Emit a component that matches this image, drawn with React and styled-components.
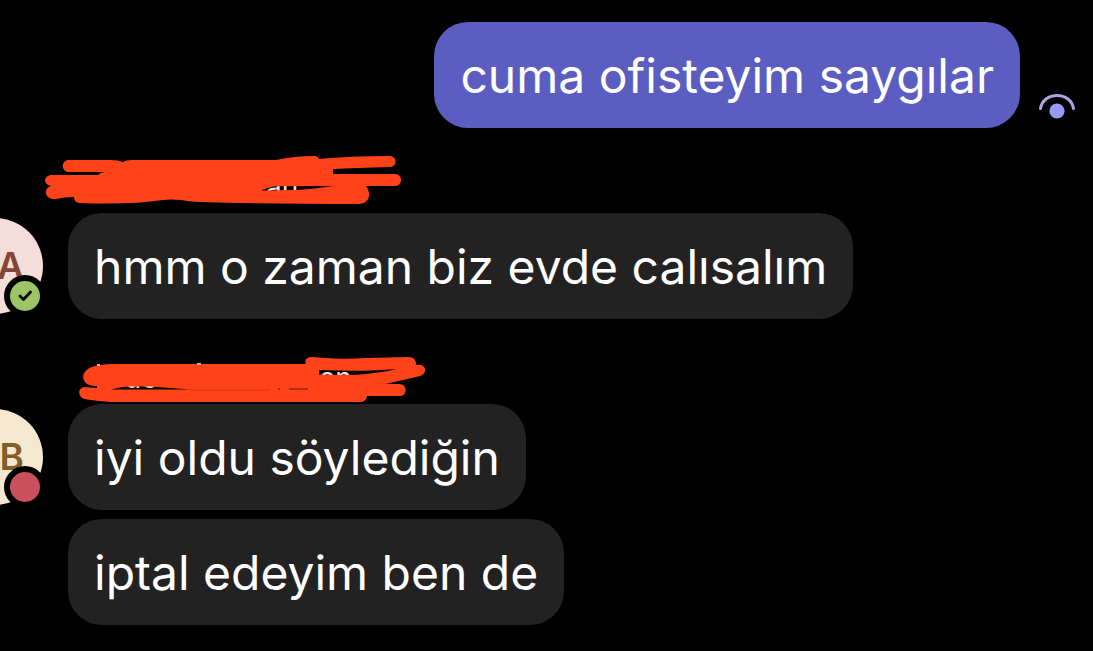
import React from "react";
import styled, { createGlobalStyle } from "styled-components";

const GlobalStyle = createGlobalStyle`
  body {
    margin: 0;
    background: #000;
    color: #fff;
    font-family: Inter, "Liberation Sans", sans-serif;
  }
`;

const Thread = styled.main`
  box-sizing: border-box;
  min-height: 100vh;
  padding: 22px 0 24px;
  display: flex;
  flex-direction: column;
  gap: 35px;
  overflow: hidden;
`;

const SentRow = styled.section`
  display: flex;
  justify-content: flex-end;
  align-items: flex-end;
  gap: 18px;
  padding-right: 17px;
`;

const Bubble = styled.p`
  margin: 0;
  padding: 21px 26px 19px;
  border-radius: 34px;
  background: ${(p) => (p.$sent ? "#5c5dc0" : "#222222")};
  font-size: 48px;
  line-height: 66px;
`;

const SeenIcon = styled.svg`
  flex: none;
  width: 38px;
  height: 28px;
  padding-bottom: 8px;
`;

const ReceivedRow = styled.section`
  display: flex;
  align-items: flex-start;
  gap: 25px;
`;

const Avatar = styled.div`
  position: relative;
  box-sizing: border-box;
  flex: none;
  width: 96px;
  height: 96px;
  margin: 55px 0 0 -53px;
  padding-right: 19px;
  border-radius: 50%;
  background: ${(p) => p.$bg};
  color: ${(p) => p.$ink};
  font-size: 37px;
  font-weight: 600;
  line-height: 96px;
  text-align: right;
`;

const Presence = styled.span`
  position: absolute;
  right: -3px;
  bottom: -3px;
  display: flex;
  align-items: center;
  justify-content: center;
  width: 30px;
  height: 30px;
  border: 6px solid #000;
  border-radius: 50%;
  background: ${(p) => p.$color};
`;

const Messages = styled.div`
  display: flex;
  flex-direction: column;
  align-items: flex-start;
  gap: 9px;
`;

const Sender = styled.header`
  position: relative;
  display: flex;
  height: 41px;
  font-size: 28px;
  line-height: 48px;
  color: #e4e4e4;
`;

const NamePart = styled.span`
  padding-left: ${(p) => p.$indent}px;
`;

const Scribble = styled.svg`
  position: absolute;
  left: ${(p) => p.$left}px;
  top: ${(p) => p.$top}px;
`;

function FirstScribble() {
  return (
    <Scribble $left={-28} $top={-13} width="370" height="60" viewBox="40 150 370 60" aria-hidden="true">
      <path
        fill="#ff4319"
        fillRule="evenodd"
        d="M68 160H110Q119 160 123 162Q126 160 132 160H276Q294 156 314 156Q318 156 319 159Q350 156 389 156C398 156 397 167 390 167Q355 168 333 169V174H395C403 174 403 186 395 186H366C371 192 371 204 358 204Q270 204 200 202Q191 202 181 200Q170 199 163 200Q130 205 79 203Q74 202 74 197Q64 197 56 199C49 200 45 195 46 191Q47 187 51 186C43 185 43 175 52 175H98Q101 172 106 172H68C61 171 61 161 68 160ZM261 190.5Q270 186.5 278 186.3L333 186Q314 189 296 190Z"
      />
    </Scribble>
  );
}

function SecondScribble() {
  return (
    <Scribble $left={2} $top={-4} width="360" height="55" viewBox="70 350 360 55" aria-hidden="true">
      <path
        fill="#ff4319"
        fillRule="evenodd"
        d="M114 364H306C304 360 307 357 312 357Q345 360 365 358L409 357Q416 357 416 365C427 363 428 374 420 376L386 384H399C408 384 407 396 400 396H367Q366 402 360 402H110Q96 401 84 399C77 396 78 387 85 387L97 388V386C79 386 80 371 92 367Q100 364 114 364ZM111 389.5Q122 386.5 130 386.5H150Q170 388 190 389.5ZM319 370V374.5Q336 375 352 375Q382 373 396 369Q365 372 319 370Z"
      />
      <path d="M190 390H270" stroke="#d43813" strokeWidth="1" />
      <path d="M278 389H280M289 389H308" stroke="#701707" strokeWidth="1" />
      <path d="M97 365H100M197 364H201" stroke="#f4aaa0" strokeWidth="2" />
    </Scribble>
  );
}

export default function App() {
  return (
    <>
      <GlobalStyle />
      <Thread>
        <SentRow>
          <Bubble $sent>cuma ofisteyim saygılar</Bubble>
          <SeenIcon viewBox="0 0 38 28" role="img" aria-label="Görüldü">
            <path d="M2.5 16.5C4 8 11 3.5 19 3.5S34 8 35.5 16.5" fill="none" stroke="#aaa4e3" strokeWidth="3" strokeLinecap="round" />
            <circle cx="19" cy="19" r="7.6" fill="#969cf5" />
          </SeenIcon>
        </SentRow>

        <ReceivedRow>
          <Avatar $bg="#f5deda" $ink="#834636">
            A
            <Presence $color="#9dc465">
              <svg width="16" height="14" viewBox="0 0 16 14" aria-hidden="true">
                <path d="M3 7L6.5 10.5L13.5 3" fill="none" stroke="#000" strokeWidth="2.8" strokeLinecap="round" strokeLinejoin="round" />
              </svg>
            </Presence>
          </Avatar>
          <Messages>
            <Sender>
              <NamePart $indent={198}>an</NamePart>
              <FirstScribble />
            </Sender>
            <Bubble>hmm o zaman biz evde calısalım</Bubble>
          </Messages>
        </ReceivedRow>

        <ReceivedRow>
          <Avatar $bg="#f4e8d0" $ink="#80602a">
            B
            <Presence $color="#c9505c" />
          </Avatar>
          <Messages>
            <Sender>
              <NamePart $indent={56}>de</NamePart>
              <NamePart $indent={162}>an</NamePart>
              <SecondScribble />
            </Sender>
            <Bubble>iyi oldu söylediğin</Bubble>
            <Bubble>iptal edeyim ben de</Bubble>
          </Messages>
        </ReceivedRow>
      </Thread>
    </>
  );
}
